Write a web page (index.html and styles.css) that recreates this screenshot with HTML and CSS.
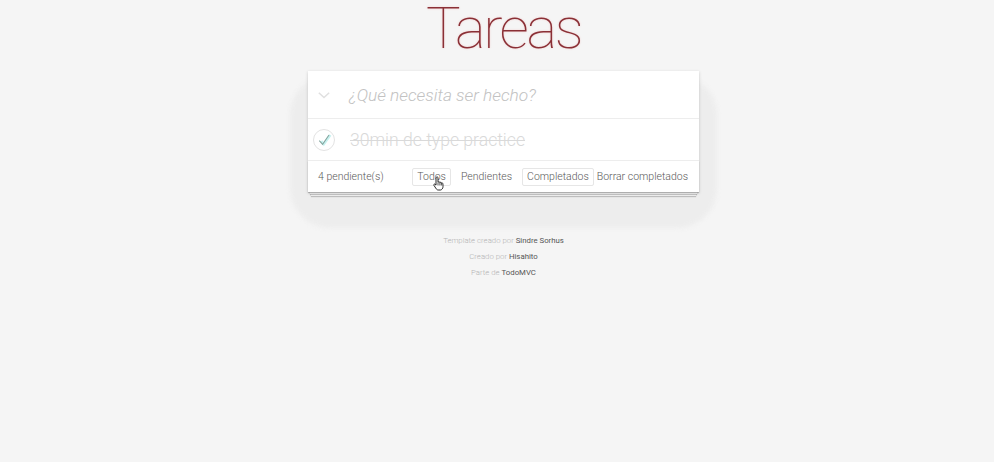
FILE: index.html
```html
<!DOCTYPE html>
<html lang="es">
<head>
<meta charset="utf-8">
<title>Tareas</title>
<link rel="stylesheet" href="styles.css">
</head>
<body>
<div class="page">
  <h1 class="title">Tareas</h1>
  <section class="todoapp">
    <div class="new-row">
      <span class="toggle-all">
        <svg width="12" height="7" viewBox="0 0 12 7"><path d="M0.8 0.8 L6 5.6 L11.2 0.8" fill="none" stroke="#e0e0e0" stroke-width="1.5"/></svg>
      </span>
      <span class="placeholder">¿Qué necesita ser hecho?</span>
    </div>
    <ul class="todo-list">
      <li class="todo completed">
        <span class="check">
          <svg width="24" height="24" viewBox="0 0 24 24"><circle cx="12" cy="12" r="10.5" fill="#fff" stroke="#e3e3e3" stroke-width="1"/><path d="M8.5 13 L11 16.3 L17.6 7" fill="none" stroke="#c8f2f0" stroke-width="2.4" transform="translate(0.8,0)"/><path d="M7.3 12.6 L10.6 16.4 L17 7" fill="none" stroke="#86a6a0" stroke-width="1.1"/></svg>
        </span>
        <span class="todo-text">30min de type practice</span>
      </li>
    </ul>
    <footer class="footer">
      <span class="count">4 pendiente(s)</span>
      <ul class="filters">
        <li class="filter selected">Todos
          <svg class="cursor" width="12" height="15" viewBox="0 0 12 15"><path d="M3.5 1.2 C4.2 0.6 5 1 5 1.8 L5 6.2 L5.4 6 C6 5.6 6.8 5.9 6.9 6.5 C7.5 6.1 8.3 6.4 8.4 7 C9 6.7 9.8 7 9.9 7.7 L10 10.5 C10 12.2 9 13.8 7.5 14 L5.2 14 C4.2 14 3.5 13.3 3 12.5 L0.9 9.3 C0.5 8.6 1.2 7.8 1.9 8.2 L3 9.1 L3 2 C3 1.6 3.2 1.4 3.5 1.2 Z" fill="#fff" stroke="#111" stroke-width="0.9"/><path d="M5 6.5 L5 9.5 M6.9 6.5 L6.9 9.5 M8.4 7 L8.4 9.5" stroke="#111" stroke-width="0.7"/></svg>
        </li>
        <li class="filter">Pendientes</li>
        <li class="filter selected">Completados</li>
      </ul>
      <span class="clear">Borrar completados</span>
    </footer>
  </section>
  <footer class="info">
    <p>Template creado por <a>Sindre Sorhus</a></p>
    <p>Creado por <a>Hisahito</a></p>
    <p>Parte de <a>TodoMVC</a></p>
  </footer>
</div>
</body>
</html>
```

FILE: styles.css
```css
html, body {
  margin: 0;
  padding: 0;
}
body {
  background: #f5f5f5;
  font-family: Roboto, "Liberation Sans", sans-serif;
  font-weight: 300;
  color: #4d4d4d;
  height: 462px;
  overflow: hidden;
}
.page {
  padding-left: 13px;
  display: flex;
  flex-direction: column;
  align-items: center;
}
.title {
  margin: 0 0 15px;
  font-weight: 100;
  font-size: 58px;
  line-height: 56px;
  color: #8a3036;
  text-shadow: 0 0 2px rgba(235, 100, 100, 0.3);
  letter-spacing: -2.4px;
}
.todoapp {
  width: 391px;
  background: #fff;
  position: relative;
  box-shadow: 0 1px 3px rgba(0, 0, 0, 0.18);
}
.todoapp::before {
  content: "";
  position: absolute;
  left: -18px;
  right: -18px;
  top: 4px;
  bottom: -36px;
  border-radius: 40px;
  background: #ededed;
  filter: blur(2px);
  z-index: -2;
}
.new-row {
  height: 47px;
  display: flex;
  align-items: center;
  border-bottom: 1px solid #ededed;
}
.toggle-all {
  width: 32px;
  display: flex;
  justify-content: center;
  padding-top: 2px;
}
.placeholder {
  font-size: 17.3px;
  font-style: italic;
  color: #c2c2c2;
  font-weight: 300;
  margin-left: 9px;
}
.todo-list {
  list-style: none;
  margin: 0;
  padding: 0;
}
.todo {
  height: 41px;
  display: flex;
  align-items: center;
  border-bottom: 1px solid #ededed;
}
.check {
  width: 32px;
  margin-right: 10px;
  display: flex;
  justify-content: center;
}
.todo-text {
  font-size: 17.6px;
  color: #d9d9d9;
  text-decoration: line-through;
  font-weight: 300;
}
.footer {
  height: 31px;
  display: grid;
  grid-template-columns: minmax(0, 1fr) auto minmax(0, 1fr);
  align-items: center;
  padding: 0 11px 0 10px;
  font-size: 10.5px;
  color: #5a5a5a;
  position: relative;
  white-space: nowrap;
}
.footer::before {
  content: "";
  position: absolute;
  left: 0;
  right: 0;
  bottom: 0;
  height: 31px;
  z-index: -1;
  box-shadow: 0 1px 1px rgba(0, 0, 0, 0.2),
    0 4px 0 -2px #f6f6f6,
    0 5px 1px -2px rgba(0, 0, 0, 0.2),
    0 7px 0 -3px #f6f6f6,
    0 8px 1px -3px rgba(0, 0, 0, 0.2);
}
.count {
  justify-self: start;
}
.filters {
  list-style: none;
  margin: 0;
  padding: 0;
  display: flex;
  gap: 5px;
}
.filter {
  position: relative;
  height: 16px;
  line-height: 16px;
  padding: 0 4px;
  border: 1px solid transparent;
  border-radius: 2px;
}
.filter.selected {
  border-color: #e6e6e6;
}
.cursor {
  position: absolute;
  left: 20px;
  top: 7px;
}
.clear {
  justify-self: end;
}
.info {
  margin-top: 43px;
  text-align: center;
  font-size: 7.8px;
  color: #b3b3b3;
}
.info p {
  margin: 0 0 5px;
  line-height: 11px;
}
.info a {
  color: #555;
  font-weight: 400;
}
```
